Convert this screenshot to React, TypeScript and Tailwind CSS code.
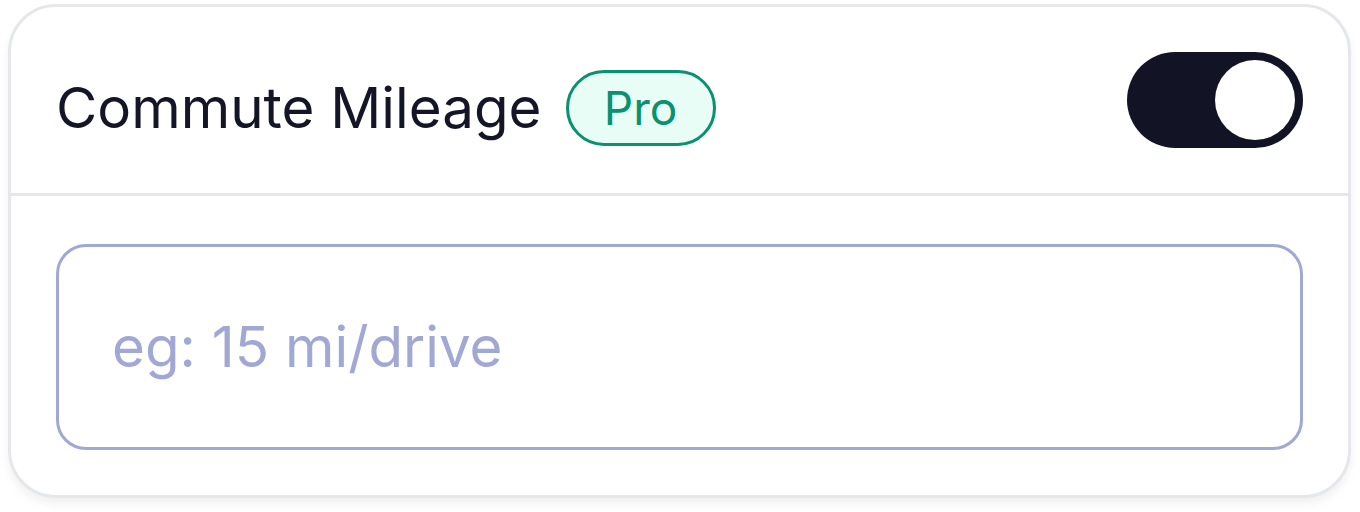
export default function App() {
  return (
    <div className="bg-white pl-[8px] pr-[9px] pt-[4px] pb-[14px]" style={{ fontFamily: "Inter, 'Noto Sans', sans-serif" }}>
      <section className="rounded-[48px] border-[3px] border-[#e5e7eb] bg-white shadow-[0_6px_10px_rgba(0,0,0,0.06)]">
        <header className="flex items-center justify-between border-b-[3px] border-[#e5e7eb] px-[45px] py-[45px]">
          <div className="mt-[16px] flex items-center gap-[24px]">
            <h2 className="text-[56.5px] leading-none text-[#141628]">Commute Mileage</h2>
            <span className="flex h-[76px] w-[150px] items-center justify-center rounded-full border-[3px] border-[#0a9170] bg-[#e8fdf6] text-[46px] leading-none text-[#0a9170]">
              Pro
            </span>
          </div>
          <button className="flex h-[96px] w-[176px] items-center justify-end rounded-full bg-[#121425] p-[8px]">
            <span className="h-[80px] w-[80px] rounded-full bg-white" />
          </button>
        </header>
        <div className="px-[45px] pt-[48px] pb-[45px]">
          <div className="flex h-[206px] items-center rounded-[30px] border-[3px] border-[#a1a8d4] px-[53px]">
            <span className="text-[56.5px] leading-none text-[#a1a8d4]">eg: 15 mi/drive</span>
          </div>
        </div>
      </section>
    </div>
  );
}
